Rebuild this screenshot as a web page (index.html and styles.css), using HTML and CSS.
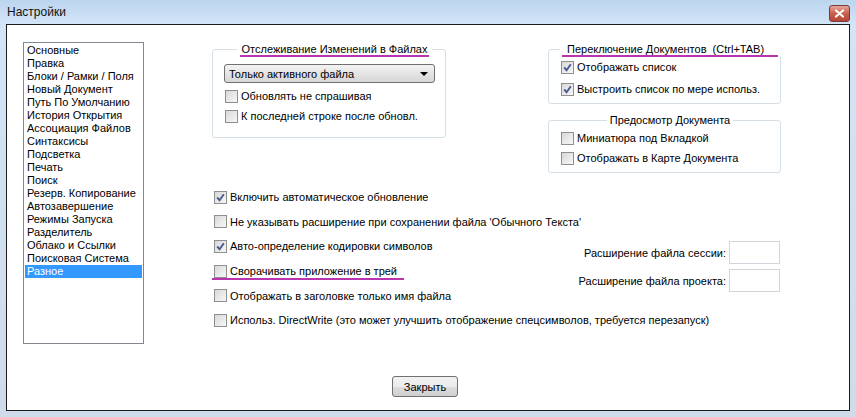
FILE: index.html
```html
<!DOCTYPE html>
<html lang="ru">
<head>
  <meta charset="UTF-8">
  <title>Настройки</title>
  <link rel="stylesheet" href="styles.css">
</head>
<body>
  <div class="window">
    <div class="titlebar">
      <span class="title">Настройки</span>
      <span class="close-btn">
        <svg width="11" height="9" viewBox="0 0 11 9"><path d="M2 1.5 L9 7.5 M9 1.5 L2 7.5" stroke="#fff" stroke-width="2.2" stroke-linecap="round"/></svg>
      </span>
    </div>

    <div class="client">
      <div class="content">
        <ul class="side-list">
          <li>Основные</li>
          <li>Правка</li>
          <li>Блоки / Рамки / Поля</li>
          <li>Новый Документ</li>
          <li>Путь По Умолчанию</li>
          <li>История Открытия</li>
          <li>Ассоциация Файлов</li>
          <li>Синтаксисы</li>
          <li>Подсветка</li>
          <li>Печать</li>
          <li>Поиск</li>
          <li>Резерв. Копирование</li>
          <li>Автозавершение</li>
          <li>Режимы Запуска</li>
          <li>Разделитель</li>
          <li>Облако и Ссылки</li>
          <li>Поисковая Система</li>
          <li class="selected">Разное</li>
        </ul>

        <div class="main">
          <div class="top-row">
            <fieldset class="group group-files">
              <legend><span class="mark">Отслеживание Изменений в Файлах</span></legend>
              <div class="select">
                <span>Только активного файла</span>
                <span class="arrow"></span>
              </div>
              <label class="check row20"><span class="box"></span>Обновлять не спрашивая</label>
              <label class="check row20"><span class="box"></span>К последней строке после обновл.</label>
            </fieldset>

            <div class="right-col">
              <fieldset class="group group-switch">
                <legend><span class="mark wide">Переключение Документов&nbsp; (Ctrl+TAB)</span></legend>
                <label class="check row22"><span class="box checked"></span>Отображать список</label>
                <label class="check row22"><span class="box checked"></span>Выстроить список по мере использ.</label>
              </fieldset>
              <fieldset class="group group-preview">
                <legend>Предосмотр Документа</legend>
                <label class="check row20"><span class="box"></span>Миниатюра под Вкладкой</label>
                <label class="check row20"><span class="box"></span>Отображать в Карте Документа</label>
              </fieldset>
            </div>
          </div>

          <div class="options">
            <label class="check opt span2"><span class="box checked"></span>Включить автоматическое обновление</label>
            <label class="check opt span2"><span class="box"></span>Не указывать расширение при сохранении файла 'Обычного Текста'</label>
            <label class="check opt"><span class="box checked"></span>Авто-определение кодировки символов</label>
            <label class="check opt tray"><span class="box"></span>Сворачивать приложение в трей</label>
            <label class="check opt"><span class="box"></span>Отображать в заголовке только имя файла</label>
            <div class="ext-fields">
              <div class="field"><span>Расширение файла сессии:</span><span class="input"></span></div>
              <div class="field"><span>Расширение файла проекта:</span><span class="input"></span></div>
            </div>
            <label class="check opt span2"><span class="box"></span>Использ. DirectWrite (это может улучшить отображение спецсимволов, требуется перезапуск)</label>
          </div>
        </div>
      </div>

      <div class="footer">
        <button class="btn">Закрыть</button>
      </div>
    </div>
  </div>
</body>
</html>
```

FILE: styles.css
```css
body {
  margin: 0;
  font-family: 'Liberation Sans', Arial, sans-serif;
  font-size: 11px;
  color: #000;
  background: #fff;
}
.window {
  width: 856px;
  height: 417px;
  box-sizing: border-box;
  padding: 0 6px 6px;
  background: linear-gradient(#bcd5ef 0, #d3e4f7 24px, #cfdbe8 100%);
  display: flex;
  flex-direction: column;
}
.titlebar {
  height: 24px;
  display: flex;
  align-items: center;
  justify-content: space-between;
  padding-left: 1px;
}
.title {
  font-size: 12px;
  color: #111;
}
.close-btn {
  width: 21px;
  height: 17px;
  margin-right: 0;
  margin-top: 2px;
  border: 1px solid #7a3a34;
  border-radius: 3px;
  background: linear-gradient(#e6a69a, #c7604f 50%, #b44636);
  display: flex;
  align-items: center;
  justify-content: center;
  box-sizing: border-box;
}
.client {
  flex: 1;
  background: #fff;
  border: 1px solid #1b1b1b;
  display: flex;
  flex-direction: column;
}
.content {
  display: flex;
  flex: 1;
}
.side-list {
  list-style: none;
  margin: 17px 0 0 16px;
  padding: 1px 1px 0;
  width: 121px;
  height: 302px;
  box-sizing: border-box;
  border: 1px solid #828790;
}
.side-list li {
  height: 13px;
  line-height: 13px;
  padding-left: 2px;
  white-space: nowrap;
}
.side-list li.selected {
  background: #3399ff;
  color: #fff;
}
.main {
  margin: 18px 0 0 68px;
  width: 568px;
}
.top-row {
  display: flex;
  justify-content: space-between;
  align-items: flex-start;
}
.group {
  margin: 0;
  padding: 0 0 0 11px;
  min-width: 0;
  border: 1px solid #d5dfe5;
  border-radius: 3px;
  box-sizing: border-box;
}
.group legend {
  margin: 0 auto;
  padding: 0 3px;
  line-height: 13px;
  height: 13px;
  white-space: nowrap;
}
.group-files {
  width: 234px;
  padding-bottom: 11px;
}
.right-col {
  width: 233px;
  margin-right: -1px;
}
.group-switch {
  padding-bottom: 3px;
}
.group-preview {
  margin-top: 10px;
  padding-top: 1px;
  padding-bottom: 4px;
}
.mark {
  display: inline-block;
  border-bottom: 2px solid #b935b0;
  line-height: 12px;
  padding: 0 2px;
}
.mark.wide {
  padding: 0 14px 0 5px;
  margin-left: -1px;
}
.tray {
  position: relative;
}
.tray::after {
  content: "";
  position: absolute;
  left: 0;
  width: 192px;
  bottom: 3px;
  height: 2px;
  background: #b935b0;
}
.select {
  margin: 8px 0 3px;
  width: 211px;
  height: 19px;
  box-sizing: border-box;
  border: 1px solid #707070;
  border-radius: 3px;
  background: linear-gradient(#f3f3f3, #e5e5e5 50%, #d6d6d6);
  display: flex;
  align-items: center;
  justify-content: space-between;
  padding: 0 6px 0 4px;
}
.arrow {
  width: 0;
  height: 0;
  border-left: 4px solid transparent;
  border-right: 4px solid transparent;
  border-top: 4px solid #000;
}
.check {
  display: flex;
  align-items: center;
  white-space: nowrap;
}
.row20 {
  height: 20px;
  padding-left: 1px;
}
.row22 {
  height: 22px;
  padding-left: 1px;
}
.box {
  width: 13px;
  height: 13px;
  box-sizing: border-box;
  border: 1px solid #8e8f8f;
  background: linear-gradient(135deg, #d8d8d8, #f7f7f7);
  margin-right: 3px;
  flex: none;
}
.box.checked {
  background:
    url("data:image/svg+xml,%3Csvg xmlns='http://www.w3.org/2000/svg' width='11' height='11'%3E%3Cpath d='M2.2 5.5 L4.6 8.2 L8.8 2.2' fill='none' stroke='%234a5a93' stroke-width='1.9'/%3E%3C/svg%3E") center no-repeat,
    linear-gradient(135deg, #d8d8d8, #f7f7f7);
}
.options {
  margin-top: 12px;
  display: grid;
  grid-template-columns: 1fr auto;
  grid-auto-rows: 24.6px;
}
.opt {
  padding-left: 2px;
  grid-column: 1;
}
.opt.span2 {
  grid-column: 1 / 3;
}
.ext-fields {
  grid-column: 2;
  grid-row: 3 / 6;
  align-self: center;
  margin-top: -9px;
}
.field {
  display: flex;
  align-items: center;
  justify-content: flex-end;
  height: 28px;
}
.input {
  width: 51px;
  height: 23px;
  box-sizing: border-box;
  border: 1px solid #d0d6dc;
  margin-left: 3px;
}
.footer {
  text-align: center;
  padding: 0 0 13px;
}
.btn {
  width: 66px;
  height: 21px;
  margin-left: -6px;
  font-family: inherit;
  font-size: 11px;
  border: 1px solid #707070;
  border-radius: 3px;
  background: linear-gradient(#f2f2f2, #ebebeb 50%, #dddddd 51%, #cfcfcf);
  padding: 0;
}
```
